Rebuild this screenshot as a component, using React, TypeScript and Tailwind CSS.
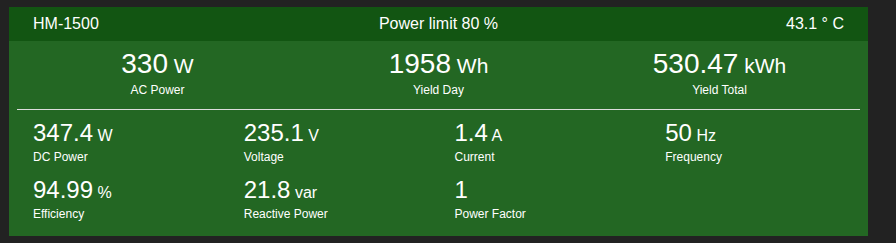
const top = [
  { value: "330", unit: "W", label: "AC Power" },
  { value: "1958", unit: "Wh", label: "Yield Day" },
  { value: "530.47", unit: "kWh", label: "Yield Total" },
];

const details = [
  { value: "347.4", unit: "W", label: "DC Power" },
  { value: "235.1", unit: "V", label: "Voltage" },
  { value: "1.4", unit: "A", label: "Current" },
  { value: "50", unit: "Hz", label: "Frequency" },
  { value: "94.99", unit: "%", label: "Efficiency" },
  { value: "21.8", unit: "var", label: "Reactive Power" },
  { value: "1", unit: "", label: "Power Factor" },
];

export default function App() {
  return (
    <div className="min-h-screen bg-[#222222] pt-[7px] pl-[9px] font-['Liberation_Sans',Arial,sans-serif]">
      <div className="w-[859px] h-[229px] bg-[#236723] text-white">
        <div className="h-[34px] bg-[#125512] px-6 grid grid-cols-3 items-center text-[16px] leading-6">
          <div className="text-left">HM-1500</div>
          <div className="text-center">Power limit 80 %</div>
          <div className="text-right">43.1 ° C</div>
        </div>

        <div className="px-2">
          <div className="grid grid-cols-3 pt-[7px] text-center">
            {top.map((t) => (
              <div key={t.label}>
                <div className="text-[28px] leading-8">
                  {t.value}
                  <span className="text-[21px] leading-none"> {t.unit}</span>
                </div>
                <div className="mt-[2px] text-[12px] leading-4">{t.label}</div>
              </div>
            ))}
          </div>

          <div className="mt-[11px] border-t border-[#dcdcdc]" />

          <div className="grid grid-cols-4 gap-y-[11px] pt-[9px]">
            {details.map((d) => (
              <div key={d.label} className="px-4">
                <div className="text-[24px] leading-7">
                  {d.value}
                  {d.unit && <span className="text-[16px] leading-none"> {d.unit}</span>}
                </div>
                <div className="mt-[2px] text-[12px] leading-4">{d.label}</div>
              </div>
            ))}
          </div>
        </div>
      </div>
    </div>
  );
}
